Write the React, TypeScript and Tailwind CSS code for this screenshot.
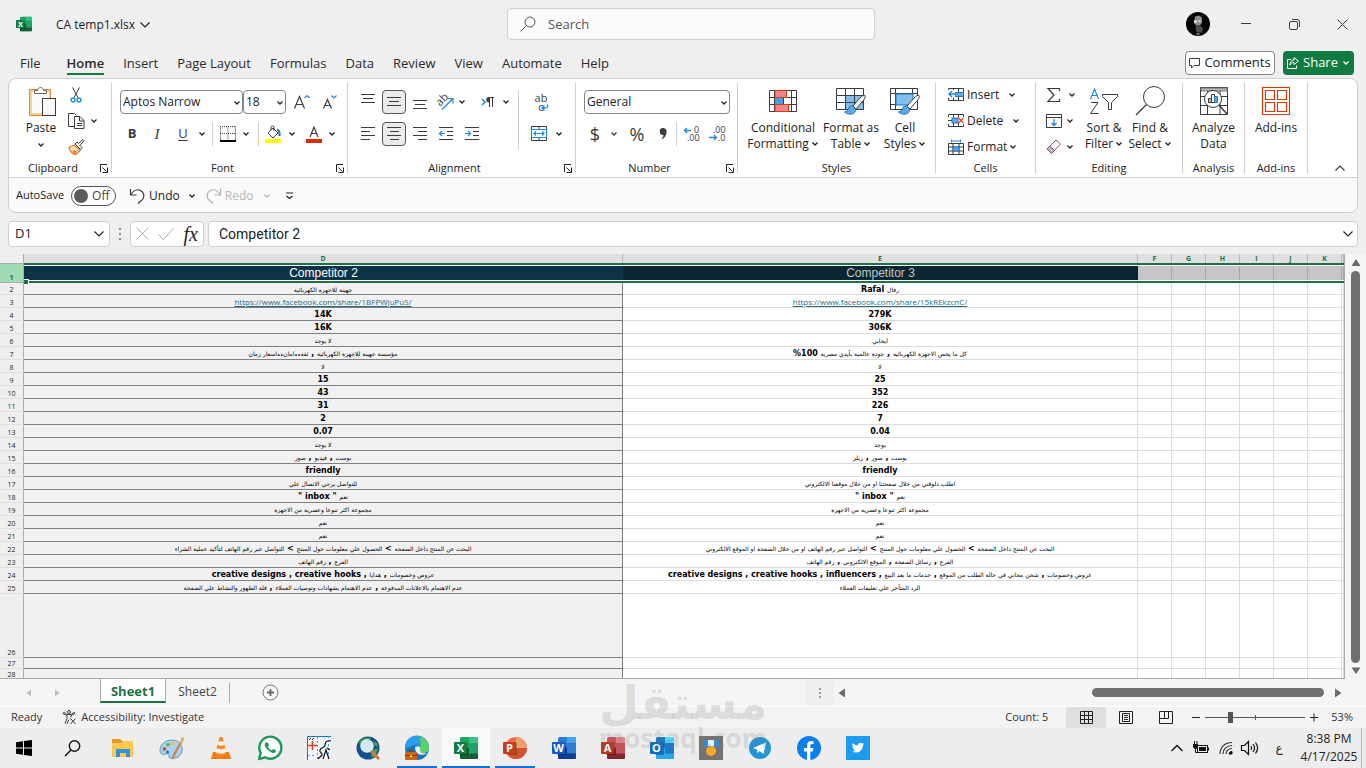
import React, { useState } from 'react';
import clsx from 'clsx';

type IconProps = { w: number; h: number; className?: string; children: React.ReactNode };

// shared frame for the ribbon glyphs, 1 unit = 1 pixel
const Icon = ({ w, h, className, children }: IconProps) => (
    <svg width={w} height={h} viewBox={`0 0 ${w} ${h}`} fill="none" stroke="#3b3b3b" className={clsx('shrink-0 overflow-visible', className)} aria-hidden="true">
        {children}
    </svg>
);

const Chevron = ({ className }: { className?: string }) => (
    <Icon w={8} h={6} className={className}>
        <path d="M1.5 1.5 4 4l2.5-2.5" strokeWidth="1.3" stroke="currentColor" />
    </Icon>
);

const WideChevron = () => (
    <Icon w={12} h={8}>
        <path d="M1.500 1.500 6 6l4.500-4.500" strokeWidth="1.2" stroke="currentColor" />
    </Icon>
);

const Btn = ({ label, className, children }: { label: string; className?: string; children: React.ReactNode }) => (
    <button aria-label={label} className={clsx('flex h-6 shrink-0 items-center justify-center', className)}>
        {children}
    </button>
);

const Drop = ({ label, className = 'w-3' }: { label: string; className?: string }) => (
    <Btn label={`${label} options`} className={className}>
        <Chevron />
    </Btn>
);

const Sep = ({ className = 'h-6' }: { className?: string }) => <span className={clsx('w-px shrink-0 bg-[#d0d0d0]', className)} />;

const Group = ({ title, width, launcher, children }: { title: string; width: string; launcher?: boolean; children: React.ReactNode }) => (
    <>
        <section className={clsx('flex shrink-0 flex-col', width)}>
            <div className="h-[81px] px-2">{children}</div>
            <div className="flex h-4 items-center">
                <span className={clsx('flex-1 text-center text-[11px]', launcher && 'pr-0.5')}>{title}</span>
                {launcher && (
                    <button aria-label={`${title} settings`} className="mr-[3px]">
                        <Icon w={9} h={9}>
                            <path d="M1.5 8V.5H8M3.5 3.5l4 4M8.500 3.500v5h-5" stroke="#222" />
                        </Icon>
                    </button>
                )}
            </div>
        </section>
        <Sep className="my-1" />
    </>
);

const BigButton = ({ lines, icon, width, drop }: { lines: string[]; icon: React.ReactNode; width: string; drop?: boolean }) => (
    <button className={clsx('flex shrink-0 flex-col items-center pt-[7px] text-xs leading-4 whitespace-nowrap', width)}>
        <span className="mb-1 flex h-[30px] items-center">{icon}</span>
        {lines.map((line, i) => (
            <span key={line} className="flex items-center gap-0.5">
                {line}
                {drop && i === lines.length - 1 && <Chevron />}
            </span>
        ))}
    </button>
);

const SelectBox = ({ label, value, width }: { label: string; value: string; width: string }) => (
    <div className={clsx('relative h-6 shrink-0', width)}>
        <select aria-label={label} defaultValue={value} className="block h-6 w-full appearance-none rounded border border-[#868686] bg-white pl-[2px] text-xs text-[#222]">
            <option>{value}</option>
        </select>
        <Chevron className="pointer-events-none absolute top-[10px] right-[2px]" />
    </div>
);

const Lines = ({ d }: { d: string }) => (
    <Icon w={16} h={14}>
        <path d={d} />
    </Icon>
);

const OfficeIcon = ({ letter, dark, tones, round, size = 24 }: { letter: string; dark: string; tones: string[]; round?: boolean; size?: number }) => (
    <svg width={size} height={size} viewBox="0 0 24 24" aria-hidden="true">
        {round ? (
            <>
                <circle cx="13" cy="12" r="11" fill={tones[1]} />
                <path d="M13 1a11 11 0 0 1 11 11H13z" fill={tones[0]} />
                <path d="M2 12h22a11 11 0 0 1-22 0z" fill={tones[2]} />
            </>
        ) : (
            <>
                <rect x="6" y="1" width="18" height="22" rx="1.5" fill={tones[1]} />
                <path d="M15 1h7.500A1.500 1.500 0 0 1 24 2.500V7h-9z" fill={tones[0]} />
                <path d="M6 12h18v9.500a1.500 1.500 0 0 1-1.500 1.500h-15A1.500 1.500 0 0 1 6 21.500z" fill={tones[2]} />
                <path d="M15 12h9v5.500h-9z" fill={tones[1]} />
            </>
        )}
        <rect x="5" y="7" width="9" height="12" fill="#000" opacity=".25" />
        <rect x="0" y="6" width="13" height="12" rx="1" fill={dark} />
        <text x="6.500" y="16" textAnchor="middle" fontSize="11" fontWeight="700" fill="#fff">
            {letter}
        </text>
    </svg>
);

const EXCEL_TONES = ['#33c481', '#21a366', '#185c37'];

const TableBrush = ({ cell }: { cell?: boolean }) => (
    <Icon w={30} h={28}>
        {cell ? (
            <>
                <path d="M.5 1.500h27v21H.5zM.5 6.500h27M5.500 1.500v21M22.500 1.500v5M.5 17.500h22" />
                <rect x="6" y="7" width="17" height="11" fill="#83beec" stroke="#1f79c4" />
            </>
        ) : (
            <>
                <rect x="9.500" y="8.500" width="18" height="14" fill="#83beec" stroke="none" />
                <path d="M.5 1.500h27v21H.5zM.5 8.500h27M.5 15.500h27M9.500 1.500v21M18.500 1.500v21" />
            </>
        )}
        <path d="M29 8.500c-1-1-3 .5-5 2.500l-7 8 3 3 6-7c2-2 4-5 3-6.500z" fill="#fff" />
        <path d="M17 19c-2-.5-4 .5-4.500 2.500s-1.500 3-4 3.500c3 2.500 8 3 10 .5 1-1.500 1.500-2.500.5-4z" fill="#5ea9e6" stroke="#1f6fb5" />
    </Icon>
);

const TABS = ['File', 'Home', 'Insert', 'Page Layout', 'Formulas', 'Data', 'Review', 'View', 'Automate', 'Help'];

const TitleBar = () => (
    <header className="flex h-12 shrink-0 items-center">
        <div className="flex flex-1 items-center pl-4">
            <OfficeIcon letter="X" dark="#107c41" tones={EXCEL_TONES} size={16} />
            <button className="ml-6 flex items-center gap-1 pt-0.5 text-xs">
                CA temp1.xlsx
                <WideChevron />
            </button>
        </div>
        <label className="flex h-8 w-[368px] items-center rounded border border-[#d0d0d0] bg-[#fbfbfb] pl-3">
            <Icon w={16} h={16}>
                <circle cx="10" cy="6" r="5" stroke="#555" />
                <path d="M6.500 9.500.5 15.500" stroke="#555" />
            </Icon>
            <input aria-label="Search" placeholder="Search" className="ml-3 flex-1 bg-transparent pt-px text-[13px] outline-none placeholder:text-[#555]" />
        </label>
        <div className="flex flex-1 items-center justify-end">
            <button aria-label="Account" className="mr-3">
                <svg width="24" height="24" viewBox="0 0 24 24">
                    <circle cx="12" cy="12" r="12" fill="#050505" />
                    <path d="M9 4.500 13 3.500l3 2v5l-2 3h-4L8 11z" fill="#8f8f8f" />
                    <path d="M8 8.500h3v2H8zM12.500 8.500h2v1.500h-2z" fill="#eee" />
                    <path d="M10 14h5l2 3-1 3.500h-5L9.500 18z" fill="#4b4b4b" />
                    <path d="M10.500 22h3" stroke="#ddd" />
                </svg>
            </button>
            <Btn label="Minimize" className="w-12"><Icon w={10} h={10}><path d="M0 4.500h10" /></Icon></Btn>
            <Btn label="Restore" className="w-12">
                <Icon w={11} h={11}>
                    <rect x=".5" y="2.500" width="8" height="8" rx="1.500" />
                    <path d="M3 .5h5a2.500 2.500 0 0 1 2.500 2.500v5" />
                </Icon>
            </Btn>
            <Btn label="Close" className="w-12"><Icon w={11} h={11}><path d="m.5.5 10 10M10.500.5l-10 10" /></Icon></Btn>
        </div>
    </header>
);

const MenuBar = () => (
    <nav className="flex h-[30px] shrink-0 items-center pr-3 pl-5">
        <div className="flex flex-1 items-center gap-[19px]">
            {TABS.map(tab => (
                <button key={tab} className={clsx('h-6 text-[13px] leading-5 text-[#2b2b2b]', tab === 'Home' && 'ml-[7px] border-y-2 border-t-transparent border-b-[#107c41] font-semibold')}>
                    {tab}
                </button>
            ))}
        </div>
        <button className="flex h-6 w-[90px] items-center justify-center gap-1 rounded border border-[#868686] bg-white text-[13px]">
            <Icon w={11} h={12}><path d="M.5 1.500h10v7H5L2.500 11V8.500h-2z" /></Icon>
            Comments
        </button>
        <button className="ml-2 flex h-6 w-[71px] items-center justify-center gap-1 rounded bg-[#107c41] text-[13px] text-white">
            <Icon w={12} h={12}><path d="M4 2.500H.5v9h9V8.500M7 .5l4.500 3.500L7 7.500v-2c-2 0-3 .5-4 2.500 0-3 1.500-5 4-5z" stroke="#fff" /></Icon>
            Share
            <Chevron />
        </button>
    </nav>
);

const ClipboardGroup = () => (
    <Group title="Clipboard" width="w-[102px]" launcher>
        <div className="flex">
            <button className="ml-1 flex w-10 flex-col items-center pt-[7px] text-xs leading-4">
                <span className="mb-1 ml-[3px] flex h-[30px] items-center">
                    <Icon w={28} h={31}>
                        <rect x="2" y="5" width="19" height="23" fill="#fafafa" stroke="#f8cf8c" strokeWidth="2" />
                        <path d="M.5 3.500h21v26H.5z" stroke="#e08a3a" />
                        <path d="M5.500 7.500v-3h3c0-4 6-4 6 0h3v3z" fill="#fff" stroke="#666" />
                        <rect x="13.500" y="12.500" width="13" height="17" fill="#fafafa" />
                    </Icon>
                </span>
                Paste
                <Chevron className="mt-[6px]" />
            </button>
            <div className="ml-px flex flex-col pt-1">
                <Btn label="Cut" className="mb-0.5 w-7">
                    <Icon w={12} h={16}>
                        <path d="M2.500.5 8 10.500M9.500.5 4 10.500" />
                        <circle cx="3" cy="13" r="2" stroke="#1f88d8" strokeWidth="1.300" />
                        <circle cx="9" cy="13" r="2" stroke="#1f88d8" strokeWidth="1.300" />
                    </Icon>
                </Btn>
                <div className="mb-0.5 flex">
                    <Btn label="Copy" className="w-7">
                        <Icon w={17} h={16}>
                            <path d="M6 13.500H.5V.5h6l2 2" />
                            <path d="M6.500 3.500H12l4 4v8H6.500z" fill="#fff" />
                            <path d="M11.500 3.500v4.500h4.500M9 10.500h5M9 12.500h5" />
                        </Icon>
                    </Btn>
                    <Drop label="Copy" className="w-2" />
                </div>
                <Btn label="Format Painter" className="w-7">
                    <Icon w={17} h={16}>
                        <path d="M1 8.500 6 6l6 5.500-4 4C5 15 2 12.500 1 8.500z" fill="#fde3c8" stroke="#e07b2a" strokeWidth="1.300" />
                        <path d="M4 11l5 1.500-2 2.500z" fill="#e07b2a" stroke="none" />
                        <path d="m7 5 5.500 5.500 1.500-2L12 6.500l4-5-1-1-4.500 4L9 3z" fill="#fff" />
                    </Icon>
                </Btn>
            </div>
        </div>
    </Group>
);

const FontGroup = () => (
    <Group title="Font" width="w-[235px]" launcher>
        <div className="flex flex-col gap-2 pt-[11px]">
            <div className="flex items-center">
                <SelectBox label="Font" value="Aptos Narrow" width="w-[123px]" />
                <span className="w-0.5" />
                <SelectBox label="Font size" value="18" width="w-[43px]" />
                <Btn label="Increase font size" className="w-8">
                    <Icon w={16} h={16}>
                        <path d="M.5 14.500 5.500 2.500l5 12M2.500 10.500h6" strokeWidth="1.200" />
                        <path d="m10.500 4 2.500-2.500L15.500 4" stroke="#1f88d8" strokeWidth="1.200" />
                    </Icon>
                </Btn>
                <Btn label="Decrease font size" className="w-6">
                    <Icon w={14} h={16}>
                        <path d="M.5 14.500 4.500 5.500l4 9M2 11.500h5" strokeWidth="1.200" />
                        <path d="M8.500 1.500 11 4l2.500-2.500" stroke="#1f88d8" strokeWidth="1.200" />
                    </Icon>
                </Btn>
            </div>
            <div className="flex items-center">
                <Btn label="Bold" className="w-6 text-[13px] font-bold text-[#3b3b3b]">B</Btn>
                <Btn label="Italic" className="w-[26px] font-['Liberation_Serif',serif] text-[15px] text-[#3b3b3b] italic">I</Btn>
                <Btn label="Underline" className="w-[26px] text-[13px] text-[#3b3b3b] underline underline-offset-2">U</Btn>
                <Drop label="Underline" />
                <Sep className="mx-1 h-6" />
                <Btn label="Borders" className="w-[22px]">
                    <Icon w={16} h={16}>
                        <path d="M.5.5v14M15.500.5v14M0 .5h16M8 .5v14M0 7.500h16" strokeDasharray="1 1" />
                        <path d="M0 15h16" stroke="#000" strokeWidth="2" />
                    </Icon>
                </Btn>
                <Drop label="Borders" className="w-[14px]" />
                <Sep className="mx-[5px] h-6" />
                <Btn label="Fill color" className="w-5">
                    <Icon w={18} h={17}>
                        <path d="m3 7 5-5 5 5-5 5zM6 4V1.500a1.500 1.500 0 0 1 3 0V5" />
                        <path d="M12 4c2 0 3 2 2.500 6" stroke="#1f6fb5" strokeWidth="2" />
                        <path d="M0 15h16" stroke="#ff0" strokeWidth="4" />
                    </Icon>
                </Btn>
                <Drop label="Fill color" className="w-4" />
                <Btn label="Font color" className="w-7">
                    <Icon w={16} h={17}>
                        <path d="M4 11 8 1l4 10M5.500 7.500h5" strokeWidth="1.200" />
                        <path d="M0 15h16" stroke="#dc2c07" strokeWidth="4" />
                    </Icon>
                </Btn>
                <Drop label="Font color" className="w-2" />
            </div>
        </div>
    </Group>
);

const AlignmentGroup = () => (
    <Group title="Alignment" width="w-[227px]" launcher>
        <div className="flex pt-[11px]">
            <div className="flex w-[165px] flex-col gap-2">
                <div className="flex gap-0.5">
                    <Btn label="Top align" className="w-6 pb-1"><Lines d="M1 1.500h14M3 5.500h10M1 9.500h14" /></Btn>
                    <Btn label="Middle align" className="w-6 rounded border border-[#555] bg-[#ebebeb]"><Lines d="M1 2.500h14M3 6.500h10M1 10.500h14" /></Btn>
                    <Btn label="Bottom align" className="w-6 pt-1"><Lines d="M1 3.500h14M3 7.500h10M1 11.500h14" /></Btn>
                    <Btn label="Orientation" className="w-[22px]">
                        <Icon w={18} h={18}>
                            <text x="0" y="12" transform="rotate(-45 4 8)" fontSize="11" fill="#3b3b3b" stroke="none">ab</text>
                            <path d="M6 16.500 16.500 6M11.500 5.500h5.500v5" stroke="#1f88d8" strokeWidth="1.200" />
                        </Icon>
                    </Btn>
                    <Drop label="Orientation" className="w-2" />
                    <Btn label="Text direction" className="ml-2 w-6">
                        <Icon w={14} h={12}>
                            <path d="m1 3 3 3-3 3" stroke="#1f88d8" strokeWidth="1.500" />
                            <path d="M8.500 11V1.500M11.500 11V1.500M7.500 1.500H13" />
                            <path d="M9 1H8a2.500 2.500 0 0 0 0 5.500h1z" fill="#3b3b3b" stroke="none" />
                        </Icon>
                    </Btn>
                    <Drop label="Text direction" className="w-2" />
                </div>
                <div className="flex gap-0.5">
                    <Btn label="Align left" className="w-6"><Lines d="M1 .5h14M1 4.500h9M1 8.500h14M1 12.500h9" /></Btn>
                    <Btn label="Center" className="w-6 rounded border border-[#555] bg-[#ebebeb]"><Lines d="M1 .5h14M4 4.500h9M1 8.500h14M4 12.500h9" /></Btn>
                    <Btn label="Align right" className="w-6"><Lines d="M1 .5h14M6 4.500h9M1 8.500h14M6 12.500h9" /></Btn>
                    <Btn label="Decrease indent" className="w-6">
                        <Icon w={16} h={14}>
                            <path d="M1 .5h14M9 4.500h6M9 8.500h6M1 12.500h14" />
                            <path d="M7 6.500H1.500M4 4 1.500 6.500 4 9" stroke="#1f88d8" strokeWidth="1.200" />
                        </Icon>
                    </Btn>
                    <Btn label="Increase indent" className="w-6">
                        <Icon w={16} h={14}>
                            <path d="M1 .5h14M9 4.500h6M9 8.500h6M1 12.500h14" />
                            <path d="M1 6.500h5.500M4 4l2.500 2.500L4 9" stroke="#1f88d8" strokeWidth="1.200" />
                        </Icon>
                    </Btn>
                </div>
            </div>
            <Sep className="h-[60px]" />
            <div className="flex flex-col gap-2 pl-2">
                <button aria-label="Wrap text" className="relative flex h-6 w-6 flex-col justify-center pl-1 text-[11px] leading-[9px] text-[#3b3b3b]">
                    <span>ab</span>
                    <span>c</span>
                    <Icon w={8} h={8} className="absolute right-0.5 bottom-0.5">
                        <path d="M6.500.5c.5 3-1 3.500-3 3.500H1M3.500 1.500 1 4l2.500 2.500" stroke="#1f88d8" strokeWidth="1.300" />
                    </Icon>
                </button>
                <div className="flex">
                    <Btn label="Merge and center" className="w-6">
                        <Icon w={16} h={16}>
                            <path d="M.5.5h15v14H.5zM8 .5v3M8 12v3" />
                            <rect x=".5" y="3.500" width="15" height="8" fill="#fff" stroke="#1f88d8" />
                            <path d="M3 7.500h10M5 5.500l-2 2 2 2M11 5.500l2 2-2 2" stroke="#1f88d8" strokeWidth="1.200" />
                        </Icon>
                    </Btn>
                    <Drop label="Merge" className="w-4" />
                </div>
            </div>
        </div>
    </Group>
);

const NumberGroup = () => (
    <Group title="Number" width="w-[161px]" launcher>
        <div className="flex flex-col gap-2 pt-[11px]">
            <SelectBox label="Number format" value="General" width="w-[146px]" />
            <div className="flex items-center text-[#3b3b3b]">
                <Btn label="Accounting format" className="w-[22px] text-lg">$</Btn>
                <Drop label="Accounting format" className="w-4" />
                <Btn label="Percent style" className="ml-0.5 w-[26px] text-lg">%</Btn>
                <Btn label="Comma style" className="w-[26px]">
                    <Icon w={8} h={12}>
                        <path d="M4 0a3.500 3.500 0 0 1 3.500 3.500c0 4-2 7-5.500 8 1.500-1.500 2.500-3 2.500-4.500A3.500 3.500 0 0 1 4 0z" fill="#3b3b3b" stroke="none" />
                    </Icon>
                </Btn>
                <Sep />
                <Btn label="Increase decimal" className="ml-0.5 w-6">
                    <Icon w={17} h={16}>
                        <text x="11" y="7" fontSize="9" fill="#3b3b3b" stroke="none">0</text>
                        <text x="4" y="15" fontSize="9" fill="#3b3b3b" stroke="none">.00</text>
                        <path d="M8 4.500H1.500M4 2 1.500 4.500 4 7" stroke="#1f88d8" strokeWidth="1.300" />
                    </Icon>
                </Btn>
                <Btn label="Decrease decimal" className="ml-0.5 w-6">
                    <Icon w={17} h={16}>
                        <text x="4" y="7" fontSize="9" fill="#3b3b3b" stroke="none">.00</text>
                        <text x="9" y="15" fontSize="9" fill="#3b3b3b" stroke="none">.0</text>
                        <path d="M0 11.500h7.500M5 9l2.500 2.500L5 14" stroke="#1f88d8" strokeWidth="1.300" />
                    </Icon>
                </Btn>
            </div>
        </div>
    </Group>
);

const StylesGroup = () => (
    <Group title="Styles" width="w-[197px]">
        <div className="flex gap-1">
            <BigButton
                lines={['Conditional', 'Formatting']}
                width="w-[74px]"
                drop
                icon={
                    <Icon w={28} h={24}>
                        <path d="M.5 1.500h27v21H.5zM.5 8.500h27M.5 15.500h27M5.500 1.500v21M14.500 1.500v21M22.500 1.500v21" />
                        <path d="M6 1.500h11.500v7H6zM6 15.500h13.500v7H6z" fill="#e88" stroke="#d83b1b" />
                        <path d="M6 9h8v6H6z" fill="#4aa0e6" stroke="none" />
                    </Icon>
                }
            />
            <BigButton lines={['Format as', 'Table']} width="w-[54px]" drop icon={<TableBrush />} />
            <BigButton lines={['Cell', 'Styles']} width="w-[46px]" drop icon={<TableBrush cell />} />
        </div>
    </Group>
);

const CELL_ACTIONS = [
    {
        name: 'Insert',
        chevron: 'ml-[9px]',
        art: (
            <>
                <path d="M.5 1.500h15v12H.5zM5.500 1.500v12M10.500 1.500v12M.5 9.500h15" />
                <rect x="5.500" y="5.500" width="10" height="4" fill="#5ea9e6" stroke="#1f79c4" />
                <path d="M0 3h7v8H0z" fill="#fff" stroke="none" />
                <path d="M8 7H1M4 4 1 7l3 3" stroke="#1f88d8" strokeWidth="1.400" />
            </>
        )
    },
    {
        name: 'Delete',
        chevron: 'ml-[9px]',
        art: (
            <>
                <path d="M.5 4V1.500h15V4M.5 11v2.500h15V11M5.500 1.500v3M10.500 1.500v3M5.500 10v3.500M10.500 10v3.500M0 7.500h4" />
                <rect x="4" y="5" width="6" height="5" fill="#5ea9e6" stroke="#1f79c4" />
                <path d="m10.500 5 5 5M15.500 5l-5 5" stroke="#e2500f" strokeWidth="1.400" />
            </>
        )
    },
    {
        name: 'Format',
        chevron: 'ml-0.5',
        art: (
            <>
                <path d="M.5 4.500h15v11H.5zM5 4.500v11M11 4.500v11M.5 8h15M.5 12h15" />
                <rect x="5" y="8" width="6" height="4" fill="#5ea9e6" stroke="#1f79c4" />
                <path d="M3.500.5v3M12.500.5v3M3.500 2h9" stroke="#1f88d8" />
            </>
        )
    }
];

const CellsGroup = () => (
    <Group title="Cells" width="w-[99px]">
        <div className="flex flex-col gap-0.5 pt-1 pl-1">
            {CELL_ACTIONS.map(a => (
                <button key={a.name} className="flex h-6 items-center text-xs">
                    <Icon w={16} h={16}>{a.art}</Icon>
                    <span className="ml-[3px]">{a.name}</span>
                    <Chevron className={a.chevron} />
                </button>
            ))}
        </div>
    </Group>
);

const EditingGroup = () => (
    <Group title="Editing" width="w-[146px]">
        <div className="flex">
            <div className="flex flex-col gap-0.5 pt-1">
                <div className="flex">
                    <Btn label="AutoSum" className="w-5">
                        <Icon w={14} h={15}><path d="M12.500 3V.5H1l6 6.500-6 6.500h11.500V11" strokeWidth="1.200" /></Icon>
                    </Btn>
                    <Drop label="AutoSum" className="w-4" />
                </div>
                <div className="flex">
                    <Btn label="Fill" className="w-5">
                        <Icon w={16} h={14}>
                            <path d="M.5.5h15v13H.5zM.5 3.500h15" />
                            <path d="M8 5v6.500M5.500 9 8 11.500 10.500 9" stroke="#1f88d8" strokeWidth="1.300" />
                        </Icon>
                    </Btn>
                    <Drop label="Fill" className="w-3" />
                </div>
                <div className="flex">
                    <Btn label="Clear" className="w-5">
                        <Icon w={16} h={16}>
                            <path d="m1 10 9-9 4.500 4-9 9.500z" stroke="#8c4a86" />
                            <path d="M1 10 4 7l4.500 4.500-3 3z" fill="#c8b0c6" stroke="#8c4a86" />
                        </Icon>
                    </Btn>
                    <Drop label="Clear" className="w-3" />
                </div>
            </div>
            <BigButton
                lines={['Sort &', 'Filter']}
                width="w-[48px]"
                drop
                icon={
                    <Icon w={30} h={28}>
                        <path d="m1.500 12 4-10 4 10M3 8.500h5" stroke="#1f88d8" strokeWidth="1.200" />
                        <path d="M2 15.500h7l-7.500 11h8" />
                        <path d="M13.500 7.500h15v2l-6 6v7h-3v-7l-6-6z" fill="#fff" />
                    </Icon>
                }
            />
            <BigButton
                lines={['Find &', 'Select']}
                width="w-11"
                drop
                icon={
                    <Icon w={30} h={30}>
                        <circle cx="19" cy="11" r="10.500" />
                        <path d="M11.500 18.500 1 29" strokeWidth="1.200" />
                    </Icon>
                }
            />
        </div>
    </Group>
);

const Ribbon = () => {
    const [autoSave, setAutoSave] = useState(false);
    return (
        <div className="mx-2 shrink-0 rounded-lg border border-[#d0d0d0] bg-[#fafafa]">
            <div className="flex h-[99px] rounded-t-lg border-b border-[#d0d0d0] bg-white">
                <ClipboardGroup />
                <FontGroup />
                <AlignmentGroup />
                <NumberGroup />
                <StylesGroup />
                <CellsGroup />
                <EditingGroup />
                <Group title="Analysis" width="w-[61px]">
                    <BigButton
                        lines={['Analyze', 'Data']}
                        width="w-[45px]"
                        icon={
                            <Icon w={28} h={28}>
                                <path d="M.5.5h27v27H.5zM.5 9.500h27M.5 18.500h27M7.500 4v23M20 4v23" />
                                <path d="M1 1h26v3H1z" fill="#b5b5b5" stroke="#777" />
                                <circle cx="13" cy="12" r="8.500" fill="#fff" />
                                <path d="m19 18 8 9" strokeWidth="1.500" />
                                <path d="M8.500 11.500h3v4h-3z" fill="#b5b5b5" />
                                <path d="M11.500 7.500h3v8h-3z" fill="#fff" />
                                <path d="M14.500 9.500h3v6h-3z" fill="#5ea9e6" stroke="#1f79c4" />
                            </Icon>
                        }
                    />
                </Group>
                <Group title="Add-ins" width="w-[62px]">
                    <BigButton
                        lines={['Add-ins']}
                        width="w-[46px]"
                        icon={
                            <Icon w={28} h={28}>
                                <path d="M.5.5h27v27H.5zM3.500 3.500h9v9h-9zM15.500 3.500h9v9h-9zM3.500 15.500h9v9h-9zM15.500 15.500h9v9h-9z" stroke="#d83b01" strokeWidth="1.200" />
                            </Icon>
                        }
                    />
                </Group>
                <button aria-label="Collapse ribbon" className="mt-auto mr-3 mb-[6px] ml-auto">
                    <Icon w={10} h={6}><path d="M.5 5.500 5 1l4.500 4.500" strokeWidth="1.200" /></Icon>
                </button>
            </div>
            <div className="flex h-[34px] items-center pt-px pl-[7px] text-[11px]">
                <label className="flex items-center gap-[7px]">
                    AutoSave
                    <span className="relative flex h-5 w-[45px] items-center rounded-full border border-[#555] bg-white">
                        <input type="checkbox" checked={autoSave} onChange={e => setAutoSave(e.target.checked)} className="absolute inset-0 appearance-none" />
                        <span className="ml-0.5 size-[14px] rounded-full bg-[#5c5c5c]" />
                        <span className="ml-1 text-xs text-[#444]">{autoSave ? 'On' : 'Off'}</span>
                    </span>
                </label>
                <button className="ml-[14px] flex items-center gap-1 text-xs">
                    <Icon w={15} h={16}><path d="M.5 1v6h6M.5 7C3 3 7 .5 10.500 2.500c4.500 2.500 4 7 1.500 9.500l-4 3.500" strokeWidth="1.200" /></Icon>
                    Undo
                </button>
                <Drop label="Undo" className="ml-[6px] w-3" />
                <button disabled className="ml-2 flex items-center gap-1 text-xs text-[#b8b8b8]">
                    <Icon w={15} h={16}><path d="M14.500 1v6h-6M14.500 7C12 3 8 .5 4.500 2.500 0 5 .5 9.500 3 12l4 3.500" stroke="#b0b0b0" strokeWidth="1.200" /></Icon>
                    Redo
                </button>
                <button disabled aria-label="Redo options" className="ml-2 flex w-3 justify-center text-[#b8b8b8]"><Chevron /></button>
                <button aria-label="Customize toolbar" className="ml-3">
                    <Icon w={9} h={8}><path d="M1 1h7M1.500 4 4.500 6.500 7.500 4" strokeWidth="1.200" stroke="#222" /></Icon>
                </button>
            </div>
        </div>
    );
};

const FormulaBar = () => (
    <div className="flex h-[41px] shrink-0 items-center px-2">
        <div className="flex h-[26px] w-[102px] items-center rounded border border-[#d0d0d0] bg-white pr-1 pl-[6px]">
            <input aria-label="Name box" defaultValue="D1" className="w-0 flex-1 text-[13px] outline-none" />
            <WideChevron />
        </div>
        <span className="flex w-5 flex-col items-center gap-[3px]">
            <i className="size-0.5 bg-[#8a8a8a]" />
            <i className="size-0.5 bg-[#8a8a8a]" />
            <i className="size-0.5 bg-[#8a8a8a]" />
        </span>
        <div className="flex h-[26px] w-[74px] items-center justify-between rounded border border-[#d0d0d0] bg-white px-[5px]">
            <button aria-label="Cancel"><Icon w={13} h={13}><path d="m.5.5 12 12M12.500.5l-12 12" stroke="#aaa" /></Icon></button>
            <button aria-label="Enter"><Icon w={16} h={12}><path d="m.5 6.500 5 5 10-11" stroke="#aaa" /></Icon></button>
            <button aria-label="Insert function" className="font-['Liberation_Serif',serif] text-xl leading-5 text-[#222] italic">fx</button>
        </div>
        <div className="ml-1 flex h-[26px] flex-1 items-center rounded border border-[#d0d0d0] bg-white pr-[3px] pl-[10px]">
            <input aria-label="Formula" defaultValue="Competitor 2" className="flex-1 font-['Roboto',sans-serif] text-sm text-[#222] outline-none" />
            <WideChevron />
        </div>
    </div>
);

const ROWS: [number, string, string][] = [
    [2, 'جهينة للاجهزة الكهربائية', 'رفال Rafal'],
    [3, 'https://www.facebook.com/share/1BFPWjuPuS/', 'https://www.facebook.com/share/15kREkzcnC/'],
    [4, '14K', '279K'],
    [5, '16K', '306K'],
    [6, 'لا يوجد', 'ايجابي'],
    [7, 'مؤسسة جهينة للاجهزة الكهربائية , ثقة..امان..اسعار زمان', 'كل ما يخص الاجهزة الكهربائية , جودة عالمية بأيدي مصرية 100%'],
    [8, 'لا', 'لا'],
    [9, '15', '25'],
    [10, '43', '352'],
    [11, '31', '226'],
    [12, '2', '7'],
    [13, '0.07', '0.04'],
    [14, 'لا يوجد', 'يوجد'],
    [15, 'بوست , فيديو , صور', 'بوست , صور , ريلز'],
    [16, 'friendly', 'friendly'],
    [17, 'للتواصل يرجي الاتصال علي', 'اطلب دلوقتي من خلال صفحتنا او من خلال موقعنا الالكتروني'],
    [18, 'نعم " inbox "', 'نعم " inbox "'],
    [19, 'مجموعة اكثر تنوعا وعصرية من الاجهزة', 'مجموعة اكثر تنوعا وعصرية من الاجهزة'],
    [20, 'نعم', 'نعم'],
    [21, 'نعم', 'نعم'],
    [22, 'البحث عن المنتج داخل الصفحة > الحصول علي معلومات حول المنتج > التواصل عبر رقم الهاتف لتأكيد عملية الشراء', 'البحث عن المنتج داخل الصفحة > الحصول علي معلومات حول المنتج > التواصل عبر رقم الهاتف او من خلال الصفحة او الموقع الالكتروني'],
    [23, 'الفرع , رقم الهاتف', 'الفرع , رسائل الصفحة , الموقع الالكتروني , رقم الهاتف'],
    [24, 'عروض وخصومات , هدايا , creative designs , creative hooks', 'عروض وخصومات , شحن مجاني في حالة الطلب من الموقع , خدمات ما بعد البيع , creative designs , creative hooks , influencers'],
    [25, 'عدم الاهتمام بالاعلانات المدفوعة , عدم الاهتمام بشهادات وتوصيات العملاء , قلة الظهور والنشاط علي الصفحة', 'الرد المتأخر علي تعليقات العملاء'],
    [26, '', ''],
    [27, '', ''],
    [28, '', '']
];

const EMPTY_COLS = ['F', 'G', 'H', 'I', 'J', 'K', ''];

const rowHeight = (n: number) => {
    if (n === 2) return 'h-3';
    if (n === 26) return 'h-16';
    if (n > 26) return 'h-[11px]';
    return 'h-[13px]';
};

// Latin runs and digits are bold, Arabic stays regular and a bit smaller
const CellText = ({ value }: { value: string }) => {
    if (value.startsWith('http')) {
        return <a href={value} className="text-[#2a6a80] underline">{value}</a>;
    }
    return (
        <bdi dir={/[\u0600-\u06ff]/.test(value) ? 'rtl' : 'ltr'} className="font-['DejaVu_Sans',sans-serif]">
            {value.split(/([\u0600-\u06ff]+(?: [\u0600-\u06ff]+)*)/).map((part, i) => (i % 2 ? <span key={i} className="text-[6px]">{part}</span> : <b key={i}>{part}</b>))}
        </bdi>
    );
};

const Sheet = () => (
    <div className="min-h-0 flex-1 overflow-hidden border-r border-b border-[#ababab] bg-white">
        <table className="w-full table-fixed border-separate border-spacing-0 text-[8px] leading-[9px] text-black">
            <colgroup>
                <col className="w-6" />
                <col />
                <col className="w-[515px]" />
                {EMPTY_COLS.map(c => <col key={c} className={c ? 'w-[34px]' : 'w-[2px]'} />)}
            </colgroup>
            <thead>
                <tr className="h-[9px] bg-[#e0e0e0] text-[7px] text-[#1e7145]">
                    <th className="border-r border-[#ababab] bg-[#efefef] p-0" />
                    {['D', 'E', ...EMPTY_COLS].map(c => (
                        <th key={c} scope="col" className="border-r border-[#b5b5b5] p-0 leading-[9px] font-bold">{c}</th>
                    ))}
                </tr>
            </thead>
            <tbody>
                <tr className="h-5 text-xs leading-[14px]">
                    <th scope="row" className="border-y border-r border-[#ababab] bg-[#a0dbb4] p-0 text-center align-bottom text-[7px] leading-[9px] font-bold text-[#1e7145]">1</th>
                    <td className="relative border-y-2 border-[#1e7145] p-0 text-center font-['Liberation_Sans',sans-serif] text-white">
                        <div className="my-px bg-[#0d3446]">Competitor 2</div>
                        <span className="absolute -bottom-[3px] left-0 size-[5px] border-t border-r border-white bg-[#1e7145]" />
                    </td>
                    <td className="border-y-2 border-[#1e7145] p-0 text-center font-['Liberation_Sans',sans-serif] text-[#c0c6c9]">
                        <div className="my-px bg-[#0a2633]">Competitor 3</div>
                    </td>
                    {EMPTY_COLS.map(c => (
                        <td key={c} className="border-y-2 border-[#1e7145] p-0">
                            <div className="my-px h-[14px] border-r border-[#a8a8a8] bg-[#c6c6c6]" />
                        </td>
                    ))}
                </tr>
                {ROWS.map(([n, d, e]) => (
                    <tr key={n} className={rowHeight(n)}>
                        <th scope="row" className="border-r border-b border-r-[#ababab] border-b-[#e0e0e0] bg-[#efefef] p-0 text-center align-bottom text-[7px] leading-[9px] font-normal text-[#222]">{n}</th>
                        <td className="overflow-hidden border-r border-b border-[#808080] bg-[#f1f1f1] p-0 text-center whitespace-nowrap"><CellText value={d} /></td>
                        <td className="overflow-hidden border-r border-b border-[#dcdcdc] p-0 text-center whitespace-nowrap"><CellText value={e} /></td>
                        {EMPTY_COLS.map(c => <td key={c} className="border-r border-b border-[#dcdcdc] p-0" />)}
                    </tr>
                ))}
            </tbody>
        </table>
    </div>
);

const Arrow = ({ d, label, color = '#6b6b6b' }: { d: string; label: string; color?: string }) => (
    <button aria-label={label}>
        <svg width="10" height="10" viewBox="0 0 10 10" fill={color}><path d={d} /></svg>
    </button>
);

const VerticalScroll = () => (
    <div className="flex w-[21px] flex-col items-center bg-[#f5f5f5] py-1">
        <Arrow label="Scroll up" d="M5 1 9.500 8h-9z" />
        <div className="mt-[3px] mb-0.5 w-[9px] flex-1 rounded-full bg-[#707070]" />
        <Arrow label="Scroll down" d="M5 9 .5 2.500h9z" />
    </div>
);

const SheetTabs = () => (
    <div className="flex h-7 shrink-0 items-center border-b border-white bg-[#f5f5f5] text-xs">
        <div className="flex w-[100px] items-center gap-[18px] pl-6">
            <Arrow label="Previous sheet" color="#bdbdbd" d="M7 1.500v7L2.500 5z" />
            <Arrow label="Next sheet" color="#bdbdbd" d="M3 1.500v7L7.500 5z" />
        </div>
        <button className="h-6 w-[66px] self-start border-x border-b-2 border-x-[#ababab] border-b-[#1e7145] bg-white pt-0.5 text-[13px] leading-4 font-bold text-[#1e7145]">Sheet1</button>
        <button className="h-5 w-16 border-r border-[#ababab] pb-0.5 text-xs leading-4 text-[#444]">Sheet2</button>
        <button aria-label="New sheet" className="ml-8">
            <Icon w={17} h={17}>
                <circle cx="8.500" cy="8.500" r="7.500" stroke="#777" />
                <path d="M8.500 5v7M5 8.500h7" stroke="#666" strokeWidth="1.800" />
            </Icon>
        </button>
        <div className="ml-auto flex h-full w-7 flex-col items-center justify-center gap-0.5 bg-[#efefef]">
            <i className="size-0.5 bg-[#999]" />
            <i className="size-0.5 bg-[#999]" />
            <i className="size-0.5 bg-[#999]" />
        </div>
        <div className="flex w-[532px] items-center pr-[23px] pl-[3px]">
            <Arrow label="Scroll left" d="M8 .5v9L1.500 5z" />
            <div className="ml-auto h-[9px] w-[232px] rounded-full bg-[#707070]" />
            <span className="w-[9px]" />
            <Arrow label="Scroll right" d="M2 .5v9L8.500 5z" />
        </div>
    </div>
);

const StatusBar = () => (
    <div className="flex h-[21px] shrink-0 items-center bg-[#f3f3f3] pl-[11px] text-[11px] text-[#333]">
        <span>Ready</span>
        <button className="ml-5 flex items-center gap-1">
            <Icon w={15} h={15}>
                <circle cx="7" cy="2" r="1.500" />
                <path d="M1 3.500 5 5.500v3l-2 5M13 3.500 9 5.500v2M1 3.500c0-1 1-1.500 2-.5l2 1.500h4L11 3c1-1 2-.5 2 .5M7 9.500l-2 4.500M8.500 8.500l5 5.500M13.500 8.500l-5 5.500" />
            </Icon>
            Accessibility: Investigate
        </button>
        <span className="mr-[18px] ml-auto">Count: 5</span>
        <button aria-label="Normal view" className="flex h-[21px] w-10 items-center justify-center bg-[#dfdfdf]">
            <Icon w={13} h={13}><path d="M.5.5h12v12H.5zM4.500.5v12M8.500.5v12M.5 4.500h12M.5 8.500h12" stroke="#222" /></Icon>
        </button>
        <button aria-label="Page layout view" className="flex w-10 justify-center">
            <Icon w={14} h={13}><path d="M.5.5h13v12H.5zM3.500 2.500h7v8h-7zM5 4.500h4M5 6.500h4M5 8.500h4" stroke="#222" /></Icon>
        </button>
        <button aria-label="Page break view" className="flex w-10 justify-center">
            <Icon w={14} h={13}><path d="M.5.5h13v12H.5zM5.500.5v7M9.500.5v7M.5 7.500h9" stroke="#222" /></Icon>
        </button>
        <button aria-label="Zoom out" className="ml-[6px]"><Icon w={8} h={9}><path d="M0 4.500h8" stroke="#222" /></Icon></button>
        <div className="relative mx-[5px] flex w-[100px] items-center">
            <span className="absolute left-1/2 h-[5px] w-px bg-[#555]" />
            <input
                type="range"
                aria-label="Zoom"
                defaultValue={24}
                className="h-px w-full appearance-none bg-[#555] [&::-webkit-slider-thumb]:h-[11px] [&::-webkit-slider-thumb]:w-[5px] [&::-webkit-slider-thumb]:appearance-none [&::-webkit-slider-thumb]:bg-[#555]"
            />
        </div>
        <button aria-label="Zoom in"><Icon w={8} h={9}><path d="M0 4.500h8M4 .5v8" stroke="#222" /></Icon></button>
        <span className="mr-[13px] ml-[13px]">53%</span>
    </div>
);

const PINNED: { name: string; state?: 'open' | 'active'; art: React.ReactNode }[] = [
    {
        name: 'File Explorer',
        art: (
            <svg width="24" height="24" viewBox="0 0 24 24">
                <path d="M1 3h8l2 2h11v16H1z" fill="#ffca4b" />
                <path d="M1 3h8l2 2v2H1z" fill="#e9982c" />
                <path d="M5 21v-8h14v8h-4v-4H9v4z" fill="#2f94dc" />
            </svg>
        )
    },
    {
        name: 'Paint',
        art: (
            <svg width="26" height="24" viewBox="0 0 26 24">
                <path d="M13 4C6 4 1 9 1 14s4 5 6 4 4 0 3 2 2 3 6 2c6-1 8-7 7-11S18 4 13 4z" fill="#a9d3ee" stroke="#5f9cc5" />
                <circle cx="5.500" cy="13" r="1.800" fill="#d9452c" />
                <circle cx="9" cy="8.500" r="1.800" fill="#59b04a" />
                <circle cx="14" cy="7.500" r="1.800" fill="#f6c32c" />
                <circle cx="8.500" cy="16" r="1.500" fill="#2b67c0" />
                <path d="m13 23 9-17" stroke="#c98a4b" strokeWidth="2.500" />
                <path d="m21 7 1-5 2.500-1 .5 3-2.500 4z" fill="#e0b070" />
            </svg>
        )
    },
    {
        name: 'VLC',
        art: (
            <svg width="24" height="24" viewBox="0 0 24 24">
                <path d="M4 16h16l2 7H2z" fill="#f07d12" />
                <path d="M10.500 1h3L18 18c-3 2-9 2-12 0z" fill="#f58a1f" />
                <path d="m9.500 5-1 4c2 1 5 1 7 0l-1-4c-1 .7-4 .7-5 0zM7.500 12l-1 4c3 2 8 2 11 0l-1-4c-2 1.500-7 1.500-9 0z" fill="#f1f1f1" />
            </svg>
        )
    },
    {
        name: 'WhatsApp',
        art: (
            <svg width="26" height="26" viewBox="0 0 26 26">
                <path d="M2 24l1.700-6A11 11 0 1 1 8 22.300z" fill="#fff" stroke="#1d9a55" strokeWidth="2.400" strokeLinejoin="round" />
                <path d="M9 7.500c-2 1.500-1.500 4 1.500 7s6.500 4.500 8 2.500c.8-1.200.5-1.700-.5-2.200l-1.800-.8-1.500 1.400c-1.700-.6-3-1.900-3.800-3.600L12 10.500 11 8c-.4-.9-1.200-1-2-.5z" fill="#1d9a55" />
            </svg>
        )
    },
    {
        name: 'Snipping',
        art: (
            <svg width="25" height="24" viewBox="0 0 25 24" fill="none">
                <path d="M0 0h24v24H0z" fill="#f4f8fc" />
                <path d="M.5 24V.5H24" stroke="#1670d4" />
                <path d="M10.500 1v23M1 19.500h8M21.500 0v22" stroke="#35a7f2" strokeDasharray="2 2" />
                <path d="M5.500 5v9M1 9.500h9" stroke="#e0432a" strokeWidth="1.700" />
                <path d="M24 5c-4-1-6 1-6 4s-4 2-5 5 3 3 2 5-3 2-4 4M16 23l3-9 3 9M20 12l3 2" stroke="#111" strokeWidth="1.200" />
                <path d="M2 4l2-2M5 4l2-2" stroke="#222" />
            </svg>
        )
    },
    {
        name: 'Web search',
        art: (
            <svg width="25" height="24" viewBox="0 0 25 24" fill="none">
                <circle cx="12" cy="12" r="11.500" fill="#14508c" />
                <path d="M3 6c3-4 8-5 12-4l-3 3-5 1-2 4zM15 15l7-3-2 6-4 4zM17 5l4 2 1 4-4-2z" fill="#4aa552" />
                <circle cx="11" cy="10" r="6" fill="#cfe7f8" stroke="#e8eef4" strokeWidth="1.500" />
                <path d="m15 15 8 8" stroke="#c9803f" strokeWidth="3" />
            </svg>
        )
    },
    {
        name: 'Edge',
        state: 'open',
        art: (
            <svg width="26" height="26" viewBox="0 0 26 26">
                <circle cx="13" cy="13" r="12" fill="#1b75bc" />
                <path d="M1 13A12 12 0 0 1 25 12c0 4-3 6-6 6s-5-1.500-4-3c2-4-2-6-5-5-4 1-7 4-9 3z" fill="#2b9ee8" />
                <path d="M16 1.500A12 12 0 0 1 25 13c0 3.500-3 5-6 5s-5-1.500-4-3c3-5 1-9 1-13.500z" fill="#5dd06a" />
                <path d="M11 12c3-2 6 0 5 3 0 3 3 4 7 3-3 3-12 3-12-6z" fill="#eef" />
                <rect x="1" y="17" width="12" height="8" rx="1" fill="#c9661b" />
                <path d="M5 17v-1.500h4V17M1 20.500h12" stroke="#7d3a0e" fill="none" />
                <path d="M6 20h2v2H6z" fill="#ffd33c" />
            </svg>
        )
    },
    { name: 'Excel', state: 'active', art: <OfficeIcon letter="X" dark="#107c41" tones={EXCEL_TONES} /> },
    { name: 'PowerPoint', state: 'open', art: <OfficeIcon letter="P" dark="#c43e1c" tones={['#f0a070', '#ed6c47', '#d35230']} round /> },
    { name: 'Word', art: <OfficeIcon letter="W" dark="#185abd" tones={['#41a5ee', '#2b7cd3', '#103f91']} /> },
    { name: 'Access', art: <OfficeIcon letter="A" dark="#b8361c" tones={['#e0868a', '#c8525a', '#862633']} /> },
    { name: 'Outlook', art: <OfficeIcon letter="O" dark="#0f6cbd" tones={['#50d9ff', '#1a78c8', '#28a8ea']} /> },
    {
        name: 'Awards',
        art: (
            <svg width="24" height="24" viewBox="0 0 24 24">
                <path d="M0 0h24v24H0z" fill="#77726d" />
                <path d="M4 4h16v6l-5 3H9l-5-3z" fill="#2f8de0" />
                <path d="M9 4h6v6H9z" fill="#e8f2fb" />
                <circle cx="12" cy="15" r="5" fill="#f9a825" />
            </svg>
        )
    },
    {
        name: 'Telegram',
        art: (
            <svg width="22" height="22" viewBox="0 0 22 22">
                <circle cx="11" cy="11" r="11" fill="#2295d4" />
                <path d="M4 11 17 5.500l-2.500 11.500-4-3-2 2-.5-3.500z" fill="#fff" />
            </svg>
        )
    },
    {
        name: 'Facebook',
        art: (
            <svg width="24" height="24" viewBox="0 0 24 24">
                <circle cx="12" cy="12" r="12" fill="#0c7fee" />
                <path d="M10 24v-8.500H7V12h3V9.500C10 6.500 11.700 5 14.200 5c1.200 0 2.300.2 2.300.2V8H15c-1.300 0-1.700.8-1.700 1.700V12h3l-.5 3.500h-2.500V24z" fill="#fff" />
            </svg>
        )
    },
    {
        name: 'Twitter',
        art: (
            <svg width="24" height="24" viewBox="0 0 24 24">
                <path d="M0 0h24v24H0z" fill="#1d9bf0" />
                <path d="M6 15.500c2 .2 3-.3 3.500-.7-1.200-.2-2-1-2.300-2h1C7 12.300 6.300 11.400 6.300 10l1 .3C6.300 9.500 6 8.200 6.700 7c1.300 1.500 3 2.400 5.200 2.600-.3-2.200 2.600-3.700 4.300-2l1.600-.6-1 1.500 1.300-.3-1.200 1.300c.1 5.500-5.900 8.800-10.900 6z" fill="#fff" />
            </svg>
        )
    }
];

const Taskbar = () => (
    <footer className="flex h-10 shrink-0 items-stretch bg-[#ededed]">
        <button aria-label="Start" className="flex w-12 items-center justify-center">
            <svg width="16" height="16" viewBox="0 0 16 16"><path d="M0 2.200 7 1.200V7.500H0zM8 1 16 0v7.500H8zM0 8.500h7v6.300L0 13.800zM8 8.500h8V16l-8-1z" /></svg>
        </button>
        <button aria-label="Search Windows" className="mr-[3px] flex w-12 items-center justify-center">
            <Icon w={17} h={17}><circle cx="10.500" cy="6" r="5.200" stroke="#111" strokeWidth="1.400" /><path d="M7 10 1 16" stroke="#111" strokeWidth="1.400" /></Icon>
        </button>
        <div className="flex gap-px">
            {PINNED.map(app => (
                <button key={app.name} aria-label={app.name} className={clsx('flex w-12 flex-col items-center', app.state === 'active' && 'bg-[#f9f9f9]')}>
                    <span className="flex h-[38px] items-center pt-0.5">{app.art}</span>
                    {app.state && <span className={clsx('h-0.5 bg-[#1670dc]', app.state === 'active' ? 'w-full' : 'w-10')} />}
                </button>
            ))}
        </div>
        <div className="ml-auto flex items-center">
            <button aria-label="Hidden icons"><Icon w={12} h={8}><path d="M.5 7 6 1.500 11.500 7" stroke="#111" strokeWidth="1.400" /></Icon></button>
            <Icon w={16} h={14} className="ml-[10px]">
                <rect x="4.500" y="4.500" width="10" height="7" stroke="#111" />
                <path d="M6 6h7v4H6zM15 6.500h1v3h-1zM0 3h5v3L3.500 8h-2L0 6zM1 0h1v3H1zM3.500 0h1v3h-1z" fill="#111" stroke="none" />
                <path d="M2.500 8v3.500h2" stroke="#111" />
            </Icon>
            <Icon w={14} h={14} className="ml-[10px]">
                <path d="M1 13C1 6 6 1.500 13 1.500M4 13c0-5 4-8.500 9-8.500M7 13c0-3 2.500-5.500 6-5.500" stroke="#333" strokeWidth="1.200" />
                <path d="M10 13c0-1.500 1.500-2.500 3-2.500V13z" fill="#111" stroke="#111" />
            </Icon>
            <Icon w={18} h={14} className="ml-2">
                <path d="M.5 4.500h3l4-4v13l-4-4h-3zM10 5c1 1.300 1 2.700 0 4M12 3c2 2.500 2 5.500 0 8M14.500 1.500c2.700 3.500 2.700 7.500 0 11" stroke="#111" strokeWidth="1.200" />
            </Icon>
            <button className="ml-3 w-4 font-['DejaVu_Sans',sans-serif] text-xs">ع</button>
            <time dateTime="2025-04-17T20:38" className="ml-3 flex w-[60px] flex-col items-center text-xs leading-[18px] whitespace-nowrap">
                <span>8:38 PM</span>
                <span>4/17/2025</span>
            </time>
            <span className="ml-0.5 h-10 w-[5px] border-l border-[#bbb]" />
        </div>
    </footer>
);

export default function App() {
    return (
        <div className="relative flex h-screen flex-col overflow-hidden bg-[#efefef] font-['Open_Sans','Noto_Sans',sans-serif] text-[#222]">
            <TitleBar />
            <MenuBar />
            <Ribbon />
            <FormulaBar />
            <div className="flex min-h-0 flex-1">
                <Sheet />
                <VerticalScroll />
            </div>
            <SheetTabs />
            <StatusBar />
            <Taskbar />
            <div className="pointer-events-none absolute bottom-[18px] left-1/2 flex -translate-x-1/2 flex-col items-center font-bold text-[#787878]/20">
                <span dir="rtl" className="font-['DejaVu_Sans',sans-serif] text-[46px] leading-[46px]">مستقل</span>
                <span className="text-[26px] leading-6">mostaql.com</span>
            </div>
        </div>
    );
}
